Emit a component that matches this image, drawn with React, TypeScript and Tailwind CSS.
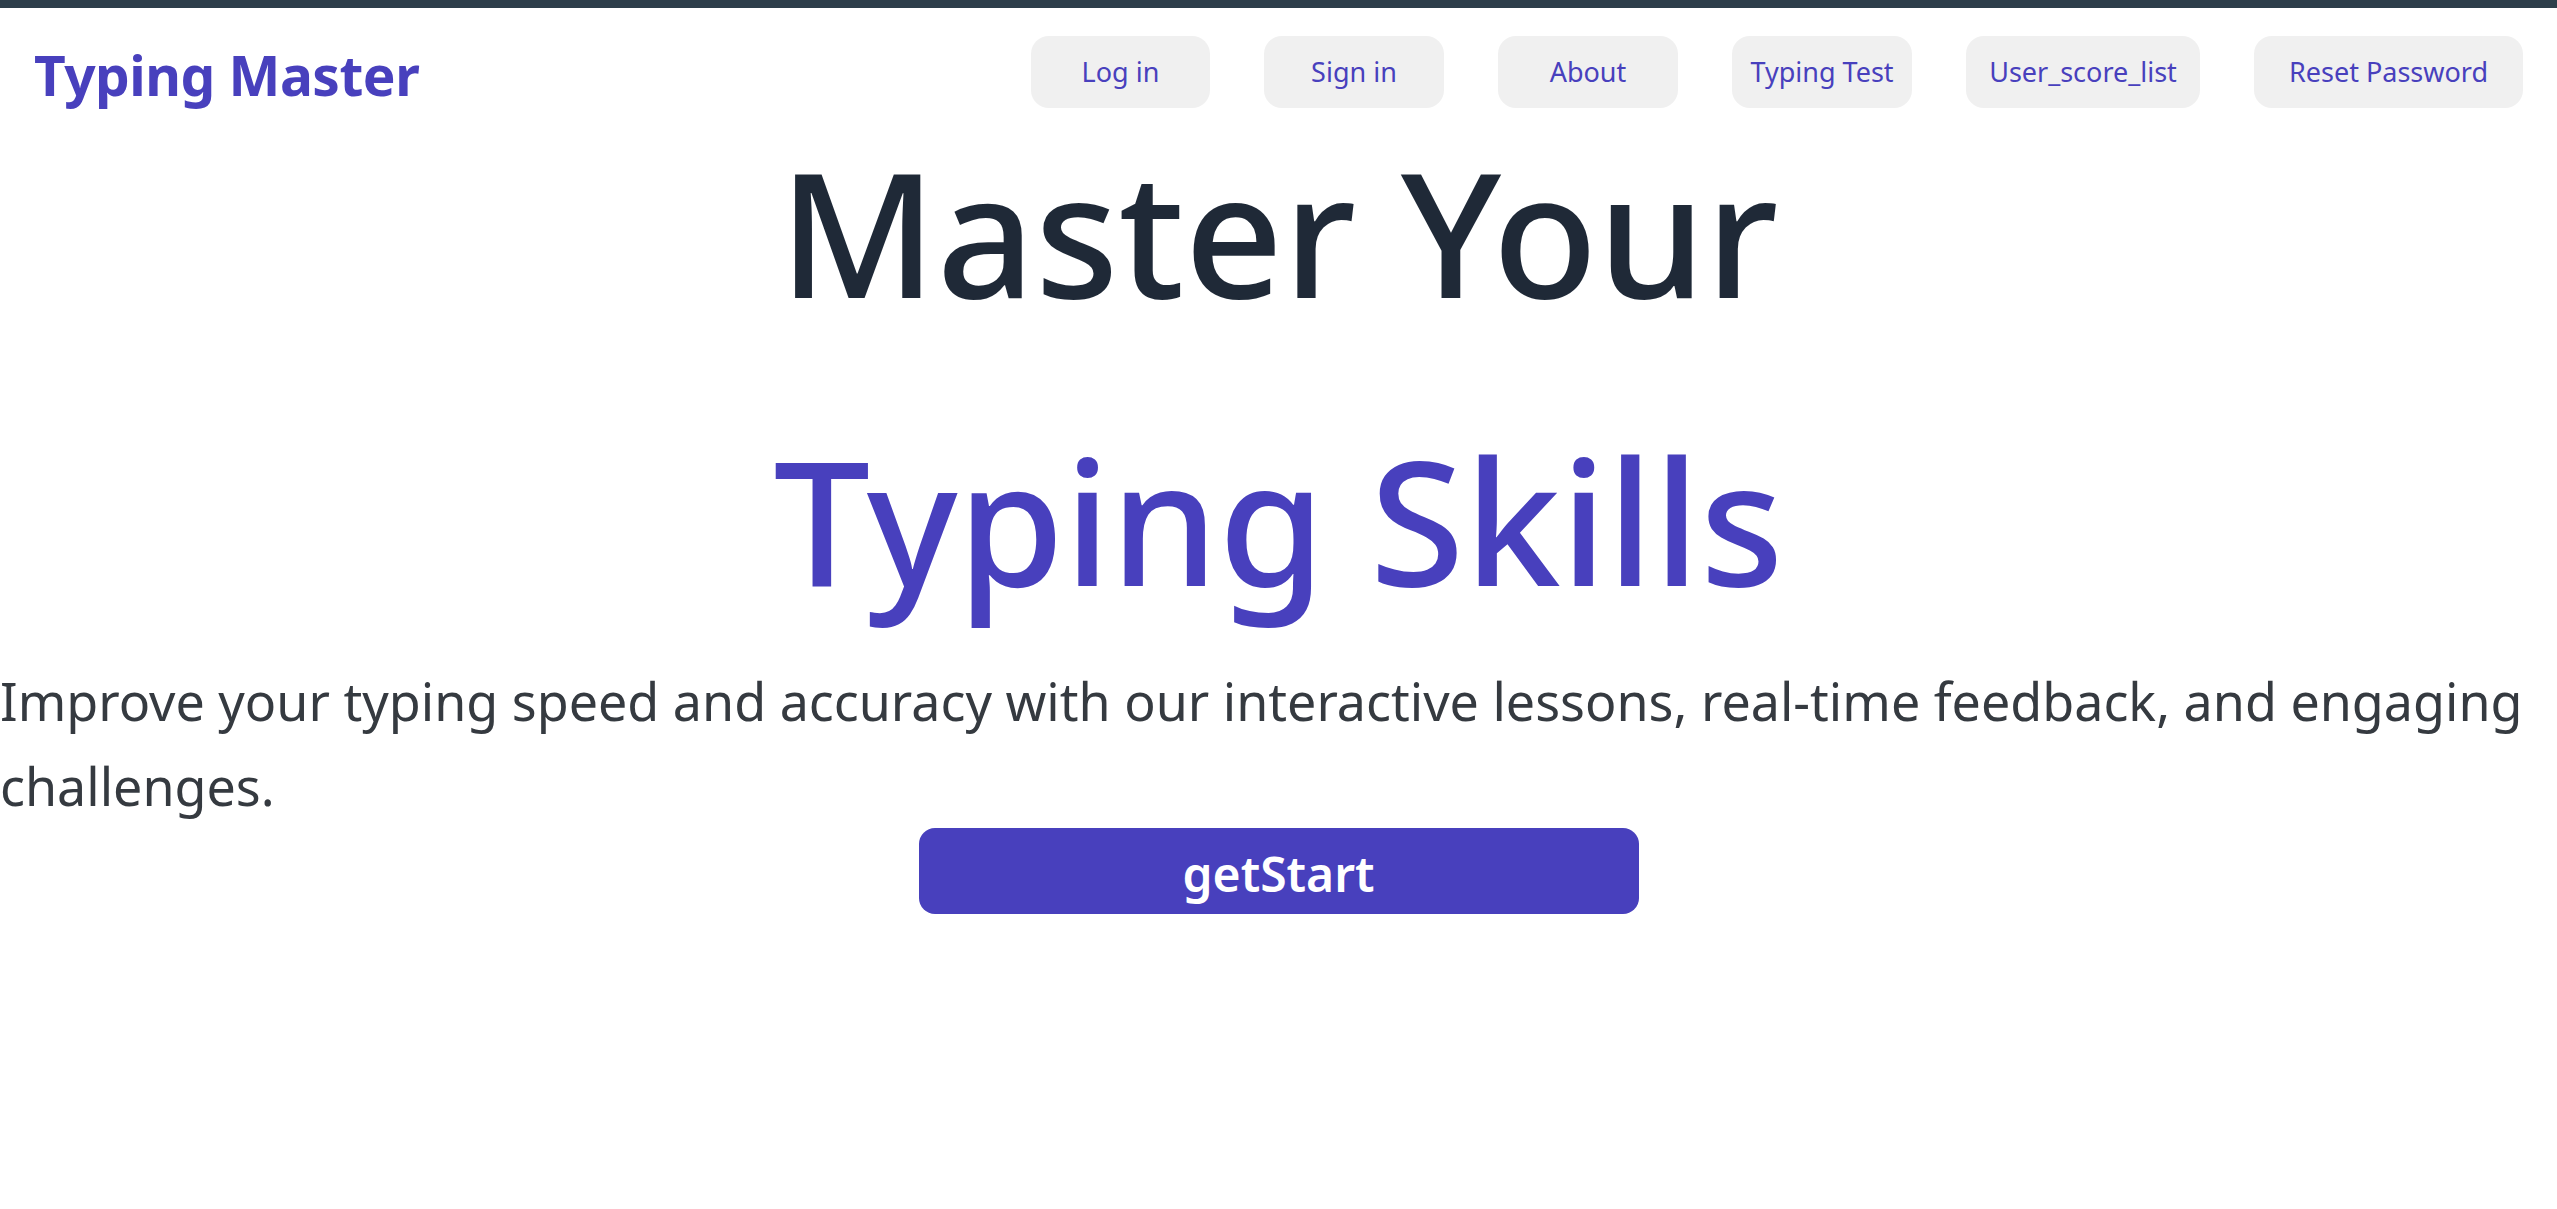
const navLinks = [
  { label: 'Log in', width: 'w-[179px]' },
  { label: 'Sign in', width: 'w-[180px]' },
  { label: 'About', width: 'w-[180px]' },
  { label: 'Typing Test', width: 'w-[180px]' },
  { label: 'User_score_list', width: 'w-[234px]' },
  { label: 'Reset Password', width: 'w-[269px]' },
];

export default function App() {
  return (
    <div className="min-h-screen border-t-8 border-[#2d3e4a] bg-white font-['Noto_Sans','Open_Sans',sans-serif]">
      {/* Navbar */}
      <header className="flex items-center justify-between px-[34px] pt-[28px]">
        <a href="#" className="mt-1 text-[55px] font-bold leading-none tracking-[-0.5px] text-[#4840bd]">
          Typing Master
        </a>
        <nav className="flex items-center gap-[54px]">
          {navLinks.map((link) => (
            <a
              key={link.label}
              href="#"
              className={`${link.width} flex h-[72px] items-center justify-center rounded-[18px] bg-[#f0f0f0] text-[27px] text-[#4840bd]`}
            >
              {link.label}
            </a>
          ))}
        </nav>
      </header>

      {/* Hero */}
      <main>
        <h1 className="text-center text-[172px] font-medium">
          <span className="block leading-[246px] text-[#1f2937]">Master Your</span>
          <span className="mt-[42px] block leading-[246px] text-[#4840bd]">Typing Skills</span>
        </h1>
        <p className="mt-[16px] text-[52px] leading-[85px] text-[#353a40]">
          Improve your typing speed and accuracy with our interactive lessons, real-time feedback, and engaging
          challenges.
        </p>
        <div className="flex justify-center">
          <button className="flex h-[86px] w-[720px] items-center justify-center rounded-[16px] bg-[#4840bd] pt-[6px] text-[48px] font-semibold text-white">
            getStart
          </button>
        </div>
      </main>
    </div>
  );
}
